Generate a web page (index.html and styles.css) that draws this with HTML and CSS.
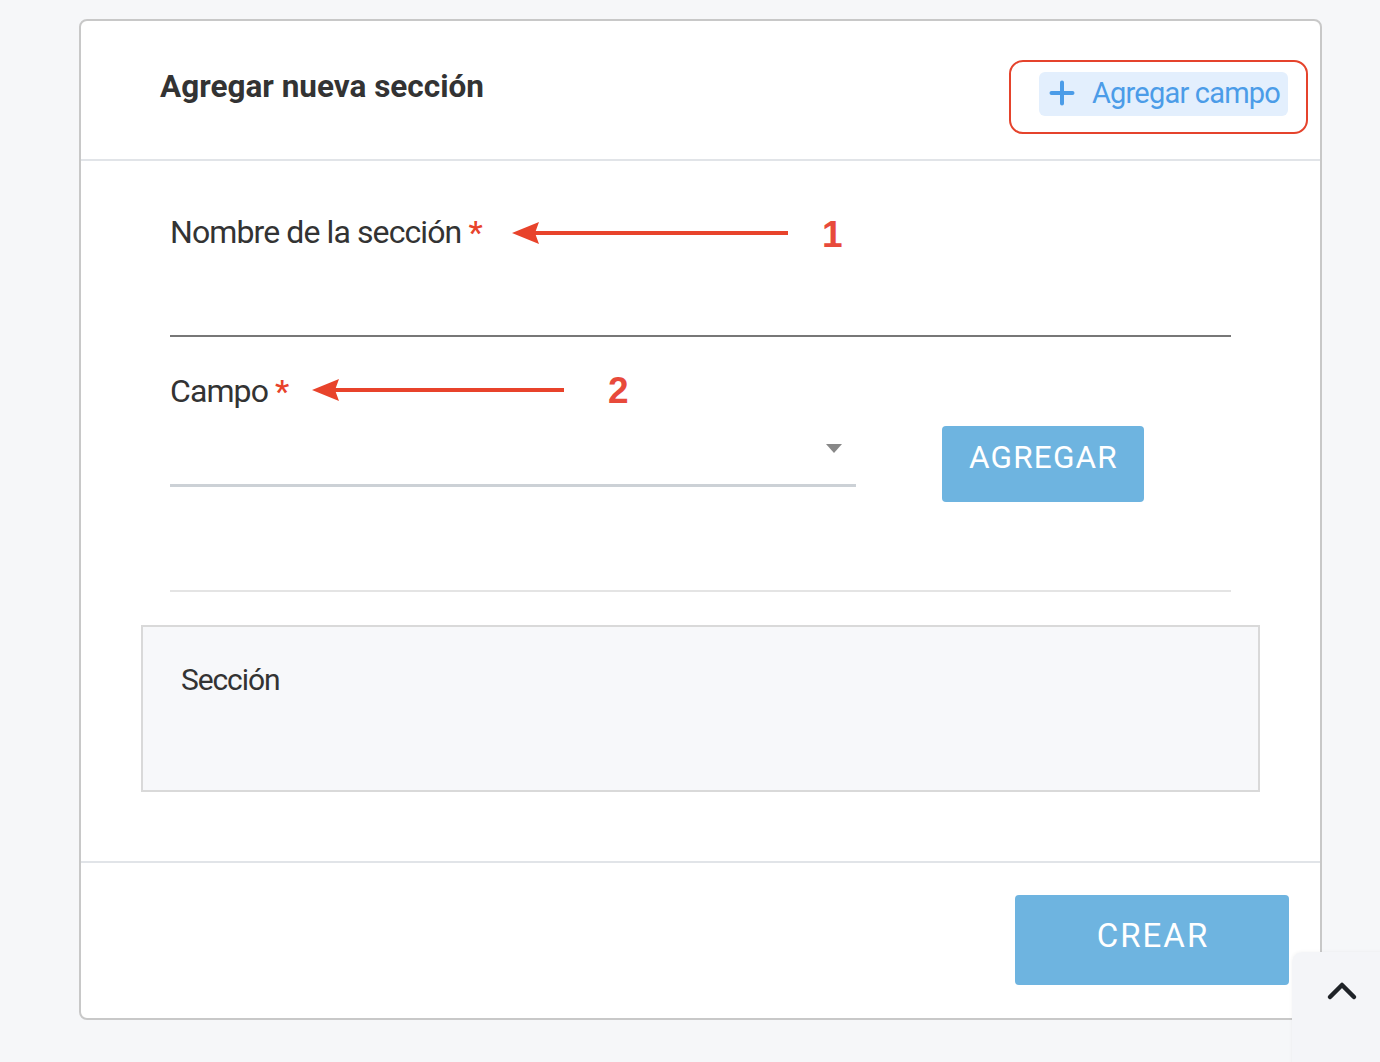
FILE: index.html
```html
<!DOCTYPE html>
<html lang="es">
<head>
<meta charset="utf-8">
<title>Agregar nueva sección</title>
<link rel="stylesheet" href="styles.css">
</head>
<body>
<div class="card">
  <div class="card-header">
    <h2 class="title">Agregar nueva sección</h2>
    <div class="highlight">
      <button class="add-field">
        <svg class="plus" width="26" height="26" viewBox="0 0 26 26"><path d="M13 2.5v21M2.5 13h21" stroke="#4b9ce8" stroke-width="4" stroke-linecap="round" fill="none"/></svg>
        <span>Agregar campo</span>
      </button>
    </div>
  </div>
  <div class="card-body">
    <div class="field name-field">
      <label class="label">Nombre de la sección <span class="req">*</span></label>
      <div class="input-line"></div>
    </div>
    <div class="field-row">
      <div class="field select-field">
        <label class="label">Campo <span class="req">*</span></label>
        <div class="select">
          <span class="caret"></span>
        </div>
      </div>
      <button class="btn btn-add">AGREGAR</button>
    </div>
    <div class="divider"></div>
    <div class="section-box">
      <span class="section-title">Sección</span>
    </div>

    <svg class="arrow arrow-1" width="280" height="26" viewBox="0 0 280 26"><polygon points="0,13 27,2 23,13 27,24" fill="#e8432b"/><line x1="22" y1="13" x2="276" y2="13" stroke="#e8432b" stroke-width="4"/></svg>
    <span class="num num-1">1</span>
    <svg class="arrow arrow-2" width="255" height="26" viewBox="0 0 255 26"><polygon points="0,13 27,2 23,13 27,24" fill="#e8432b"/><line x1="22" y1="13" x2="252" y2="13" stroke="#e8432b" stroke-width="4"/></svg>
    <span class="num num-2">2</span>
  </div>
  <div class="card-footer">
    <button class="btn btn-create">CREAR</button>
  </div>
</div>
<button class="to-top" aria-label="Subir">
  <svg width="34" height="22" viewBox="0 0 34 22"><polyline points="4,17 16,5 28,17" fill="none" stroke="#1f2328" stroke-width="4.5" stroke-linecap="round" stroke-linejoin="round"/></svg>
</button>
</body>
</html>
```
FILE: styles.css
```css
* { box-sizing: border-box; }
html, body { margin: 0; padding: 0; }
body {
  background: #f6f7f9;
  font-family: Roboto, "Open Sans", sans-serif;
  color: #333;
  height: 1062px;
  overflow: hidden;
}
.card {
  margin: 19px 0 0 79px;
  width: 1243px;
  height: 1001px;
  background: #fff;
  border: 2px solid #c8c8c8;
  border-radius: 8px;
  display: flex;
  flex-direction: column;
}
.card-header {
  height: 140px;
  border-bottom: 2px solid #e1e4e8;
  display: flex;
  justify-content: space-between;
  align-items: flex-start;
  padding: 0 12px 0 79px;
}
.title {
  margin: 46px 0 0;
  font-size: 31.5px;
  line-height: 40px;
  font-weight: 700;
  color: #333;
}
.highlight {
  margin-top: 39px;
  width: 299px;
  height: 74px;
  border: 2px solid #e5432c;
  border-radius: 14px;
  padding: 10px 18px 0 28px;
}
.add-field {
  display: flex;
  align-items: center;
  gap: 17px;
  width: 249px;
  height: 44px;
  border: none;
  border-radius: 6px;
  background: #e3effd;
  padding: 0 10px 2px;
  font-family: inherit;
  font-size: 29px;
  letter-spacing: -0.8px;
  line-height: 40px;
  color: #4b9ce8;
  white-space: nowrap;
  cursor: pointer;
}
.plus { flex: none; }
.card-body {
  position: relative;
  flex: 1;
  padding: 0 89px;
}
.label {
  display: block;
  font-size: 32px;
  letter-spacing: -0.9px;
  line-height: 40px;
  color: #333;
}
.req { color: #e8432b; font-weight: 500; letter-spacing: 0; }
.name-field { padding-top: 51px; }
.input-line {
  margin-top: 83px;
  height: 2px;
  background: #777;
}
.field-row {
  display: flex;
  align-items: flex-start;
  gap: 86px;
  margin-top: 34px;
}
.select-field { width: 686px; }
.select {
  position: relative;
  height: 76px;
  border-bottom: 3px solid #ccd1d6;
}
.caret {
  position: absolute;
  right: 14px;
  top: 33px;
  border-left: 8px solid transparent;
  border-right: 8px solid transparent;
  border-top: 9px solid #888;
}
.btn {
  border: none;
  border-radius: 4px;
  background: #6eb4e0;
  color: #fff;
  font-family: inherit;
  line-height: 40px;
  cursor: pointer;
}
.btn-add {
  margin-top: 55px;
  width: 202px;
  height: 76px;
  font-size: 31.5px;
  letter-spacing: 1.2px;
  padding: 0 0 12px 1px;
}
.divider {
  margin-top: 88px;
  height: 2px;
  background: #e4e4e4;
}
.section-box {
  margin: 33px -29px 0;
  height: 167px;
  background: #f7f8fa;
  border: 2px solid #d9d9d9;
  padding: 33px 0 0 38px;
}
.section-title {
  font-size: 30px;
  letter-spacing: -1.1px;
  line-height: 40px;
  color: #333;
}
.arrow { position: absolute; }
.arrow-1 { left: 431px; top: 59px; }
.arrow-2 { left: 231px; top: 216px; }
.num {
  position: absolute;
  font-family: "Liberation Sans", Arial, sans-serif;
  font-weight: 700;
  font-size: 37px;
  line-height: 40px;
  color: #e84a3b;
}
.num-1 { left: 741px; top: 54px; }
.num-2 { left: 527px; top: 210px; }
.card-footer {
  height: 157px;
  border-top: 2px solid #e1e4e8;
  display: flex;
  justify-content: flex-end;
  align-items: flex-start;
  padding: 32px 31px 0 0;
}
.btn-create {
  width: 274px;
  height: 90px;
  font-size: 33px;
  letter-spacing: 2px;
  padding: 0 0 9px 2px;
}
.to-top {
  position: fixed;
  left: 1292px;
  top: 952px;
  width: 100px;
  height: 120px;
  border: none;
  border-radius: 10px 0 0 0;
  background: #f4f5f8;
  box-shadow: -1px -1px 3px rgba(0,0,0,0.03);
  padding: 28px 0 0 0;
  cursor: pointer;
  display: flex;
  justify-content: flex-start;
  align-items: flex-start;
}
.to-top svg { margin-left: 34px; }
```
